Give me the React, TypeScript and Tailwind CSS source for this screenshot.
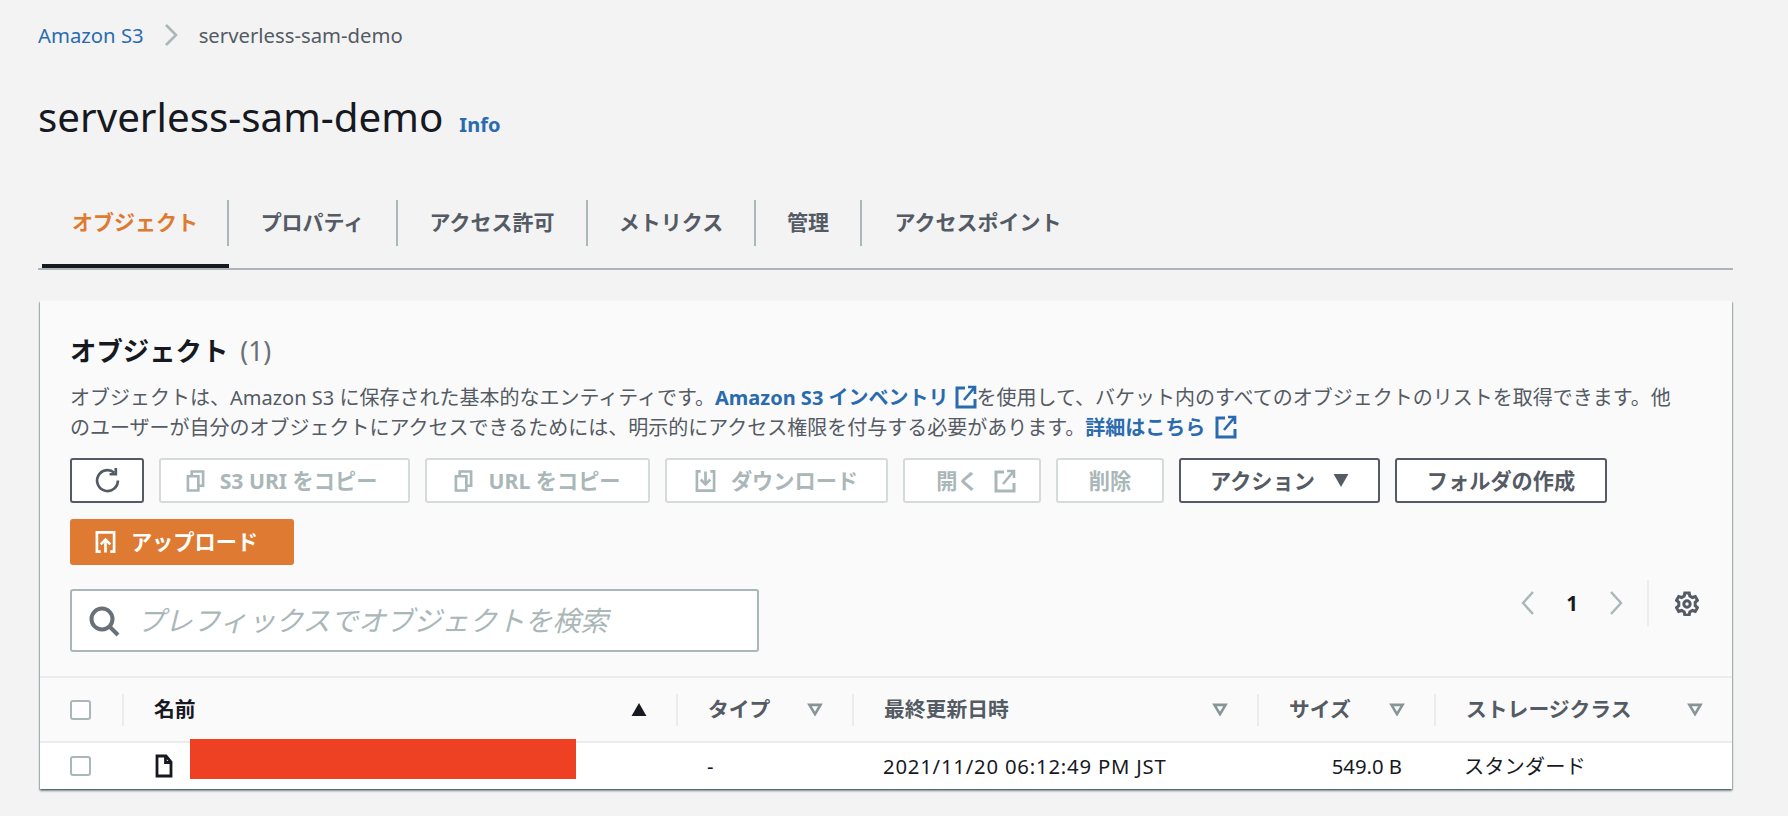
import React from "react";

const FONT = "font-['Noto_Sans','Noto_Sans_CJK_JP',sans-serif]";

function ExternalIcon({ className }: { className?: string }) {
  return (
    <svg viewBox="0 0 22 24" fill="none" stroke="currentColor" strokeWidth="3" className={className}>
      <path d="M10 3H2v19h18v-8" />
      <path d="M13 2h7v7M19.5 2.5 9 15" strokeWidth="2.6" />
    </svg>
  );
}

function CopyIcon() {
  return (
    <svg viewBox="0 0 20 24" fill="none" stroke="currentColor" strokeWidth="2.8" className="h-[24px] w-[19px]">
      <path d="M2 7h11v15H2z" />
      <path d="M6 7V2h12v15h-5" />
    </svg>
  );
}

function DownloadIcon() {
  return (
    <svg viewBox="0 0 22 24" fill="none" stroke="currentColor" strokeWidth="2.8" className="h-[26px] w-[21px]">
      <path d="M6 2H2v20h18V2h-4" />
      <path d="M11 2v13M6 10.5l5 5 5-5" />
    </svg>
  );
}

function UploadIcon() {
  return (
    <svg viewBox="0 0 22 24" fill="none" stroke="currentColor" strokeWidth="2.8" className="h-[26px] w-[21px]">
      <path d="M6 22H2V2h18v20h-4" />
      <path d="M11 23V10M6 14.5l5-5 5 5" />
    </svg>
  );
}

function DisabledButton({ w, icon, label, after }: { w: string; icon?: React.ReactNode; label: string; after?: React.ReactNode }) {
  return (
    <div className={`${w} flex h-[45px] items-center justify-center gap-[15px] rounded-[3px] border-2 border-[#d5dbdb] bg-white text-[21.2px] font-bold text-[#aab7b8]`}>
      {icon}
      <span>{label}</span>
      {after}
    </div>
  );
}

function SortDown({ dark }: { dark?: boolean }) {
  if (dark) {
    return (
      <svg viewBox="0 0 16 14" className="h-[13px] w-[16px] fill-[#16191f]">
        <path d="M8 0l8 14H0z" />
      </svg>
    );
  }
  return (
    <svg viewBox="0 0 16 14" fill="none" stroke="#879596" strokeWidth="2.8" className="h-[13px] w-[16px]">
      <path d="M2 2h12l-6 10z" />
    </svg>
  );
}

function HeaderCell({ label, w, dark, last }: { label: string; w: string; dark?: boolean; last?: boolean }) {
  return (
    <div className={`${w} flex h-[32px] items-center justify-between pl-[30px] pr-[29px] ${last ? "" : "border-r-2 border-[#eaeded]"}`}>
      <span className={`text-[20.8px] font-bold ${dark ? "text-[#16191f]" : "text-[#545b64]"}`}>{label}</span>
      <SortDown dark={dark} />
    </div>
  );
}

function Checkbox() {
  return <div className="h-[20px] w-[21px] rounded-[3px] border-2 border-[#aab7b8] bg-white" />;
}

function Tab({ w, label, active, noLine }: { w: string; label: string; active?: boolean; noLine?: boolean }) {
  return (
    <div className={`${w} h-[86px] py-[18px] ${active ? "border-b-4 border-[#16191f]" : ""}`}>
      <div className={`flex h-[46px] items-center ${noLine ? "" : "border-r-2 border-[#aab7b8]"} ${active ? "pl-[30px] text-[#df7a32]" : "justify-center"}`}>
        {label}
      </div>
    </div>
  );
}

export default function App() {
  return (
    <div className={`${FONT} h-[816px] overflow-hidden bg-[#f3f3f3] pl-[38px] pt-[22px] text-[#16191f]`}>
      {/* breadcrumb */}
      <div className="flex h-[26px] items-center text-[20.3px] leading-none">
        <span className="text-[#2a6bb0]">Amazon S3</span>
        <svg viewBox="0 0 14 22" fill="none" stroke="#aab7b8" strokeWidth="2.6" className="ml-[20px] mr-[21px] h-[22px] w-[14px]">
          <path d="M2 1l10 10L2 21" />
        </svg>
        <span className="text-[#545b64]">serverless-sam-demo</span>
      </div>

      {/* title */}
      <div className="mt-[44px] flex h-[50px] items-center">
        <h1 className="text-[40.3px] font-normal leading-none">serverless-sam-demo</h1>
        <span className="ml-[16px] mt-[16px] text-[20px] font-bold text-[#2a6bb0]">Info</span>
      </div>

      {/* tabs */}
      <div className="mt-[40px] flex h-[88px] w-[1695px] border-b-2 border-[#aab7b8] pl-[4px] text-[21px] font-bold text-[#545b64]">
        <Tab w="w-[187px]" label="オブジェクト" active />
        <Tab w="w-[169px]" label="プロパティ" />
        <Tab w="w-[190px]" label="アクセス許可" />
        <Tab w="w-[168px]" label="メトリクス" />
        <Tab w="w-[106px]" label="管理" />
        <Tab w="w-[232px]" label="アクセスポイント" noLine />
      </div>

      {/* card */}
      <div className="ml-[2px] mt-[31px] w-[1692px] bg-[#fafafa] shadow-[0_2px_2px_0_rgba(0,28,36,0.45),1px_1px_1px_0_rgba(0,28,36,0.2),-1px_1px_1px_0_rgba(0,28,36,0.2)]">
        <div className="pl-[30px] pr-[31px] pt-[34px]">
          <div className="flex h-[32px] items-center text-[26.4px] leading-none">
            <span className="font-bold">オブジェクト</span>
            <span className="ml-[12px] text-[#687078]">(1)</span>
          </div>
          <p className="mt-[16px] max-w-[1615px] text-[20px] leading-[30px] text-[#545b64]">
            オブジェクトは、Amazon S3 に保存された基本的なエンティティです。
            <span className="font-bold text-[#2a6bb0]">Amazon S3 インベントリ</span>
            <ExternalIcon className="ml-[6px] inline h-[24px] w-[22px] align-[-4px] text-[#2a6bb0]" />
            を使用して、バケット内のすべてのオブジェクトのリストを取得できます。他のユーザーが自分のオブジェクトにアクセスできるためには、明示的にアクセス権限を付与する必要があります。
            <span className="font-bold text-[#2a6bb0]">詳細はこちら</span>
            <ExternalIcon className="ml-[10px] inline h-[24px] w-[22px] align-[-4px] text-[#2a6bb0]" />
          </p>

          {/* actions */}
          <div className="mt-[15px] flex flex-wrap gap-x-[15px] gap-y-[16px]">
            <div className="flex h-[45px] w-[74px] items-center justify-center rounded-[3px] border-2 border-[#545b64] bg-white text-[#545b64]">
              <svg viewBox="0 0 24 26" fill="none" stroke="currentColor" strokeWidth="2.6" className="h-[27px] w-[25px]">
                <path d="M18.5 5.5A10 10 0 1 0 22 13" />
                <path d="M20 1v6h-6" />
              </svg>
            </div>
            <DisabledButton w="w-[251px] pr-[6px]" icon={<CopyIcon />} label="S3 URI をコピー" />
            <DisabledButton w="w-[225px]" icon={<CopyIcon />} label="URL をコピー" />
            <DisabledButton w="w-[223px]" icon={<DownloadIcon />} label="ダウンロード" />
            <DisabledButton w="w-[138px] pl-[8px]" label="開く" after={<ExternalIcon className="h-[24px] w-[22px]" />} />
            <DisabledButton w="w-[108px]" label="削除" />
            <div className="flex h-[45px] w-[201px] items-center justify-center gap-[18px] rounded-[3px] border-2 border-[#545b64] bg-white text-[21.2px] font-bold text-[#545b64]">
              <span>アクション</span>
              <svg viewBox="0 0 16 14" className="h-[13px] w-[16px] fill-[#545b64]">
                <path d="M0 0h16L8 14z" />
              </svg>
            </div>
            <div className="flex h-[45px] w-[212px] items-center justify-center rounded-[3px] border-2 border-[#545b64] bg-white text-[21.2px] font-bold text-[#545b64]">
              フォルダの作成
            </div>
            <div className="flex h-[46px] w-[224px] items-center justify-center gap-[15px] rounded-[3px] bg-[#df7a32] pr-[11px] text-[21.2px] font-bold text-white">
              <UploadIcon />
              <span>アップロード</span>
            </div>
          </div>

          {/* search + pager */}
          <div className="mt-[24px] flex items-start justify-between">
            <div className="flex h-[63px] w-[689px] items-center rounded-[3px] border-2 border-[#aab7b8] bg-white pl-[16px]">
              <svg viewBox="0 0 32 32" fill="none" stroke="#687078" strokeWidth="4" className="h-[32px] w-[32px]">
                <circle cx="14" cy="14" r="10.5" />
                <path d="M21.5 21.5 30 30" />
              </svg>
              <span className="ml-[17px] text-[27.8px] italic text-[#aab7b8]">プレフィックスでオブジェクトを検索</span>
            </div>
            <div className="-mt-[9px] flex h-[46px] items-center">
              <svg viewBox="0 0 14 24" fill="none" stroke="#aab7b8" strokeWidth="2.4" className="h-[24px] w-[14px]">
                <path d="M12 1 2 12l10 11" />
              </svg>
              <span className="mx-[31px] text-[20.5px] font-bold">1</span>
              <svg viewBox="0 0 14 24" fill="none" stroke="#aab7b8" strokeWidth="2.4" className="h-[24px] w-[14px]">
                <path d="m2 1 10 11L2 23" />
              </svg>
              <div className="ml-[24px] h-[46px] border-l-2 border-[#eaeded]" />
              <svg viewBox="0 0 24 24" fill="none" stroke="#545b64" strokeWidth="3" className="ml-[26px] mr-[2px] h-[26px] w-[24px]">
                <path d="M9.8 2h4.4l.6 3 2.6 1.5 2.9-1 2.2 3.8-2.3 2v3.4l2.3 2-2.2 3.8-2.9-1-2.6 1.5-.6 3H9.8l-.6-3-2.6-1.5-2.9 1-2.2-3.8 2.3-2v-3.4l-2.3-2 2.2-3.8 2.9 1 2.6-1.5z" />
                <circle cx="12" cy="13" r="3.2" />
              </svg>
            </div>
          </div>
        </div>

        {/* table */}
        <div className="mt-[24px] flex h-[67px] items-center border-y-2 border-[#eaeded]">
          <div className="flex h-[32px] w-[84px] items-center border-r-2 border-[#eaeded] pl-[30px]">
            <Checkbox />
          </div>
          <HeaderCell label="名前" w="w-[554px]" dark />
          <HeaderCell label="タイプ" w="w-[176px]" />
          <HeaderCell label="最終更新日時" w="w-[405px]" />
          <HeaderCell label="サイズ" w="w-[177px]" />
          <HeaderCell label="ストレージクラス" w="w-[296px]" last />
        </div>
        <div className="relative flex h-[46px] items-center bg-white text-[20.3px]">
          <div className="w-[84px] pl-[30px]">
            <Checkbox />
          </div>
          <div className="flex w-[554px] items-center pl-[31px]">
            <svg viewBox="0 0 18 24" fill="none" stroke="#16191f" strokeWidth="2.8" className="h-[24px] w-[18px]">
              <path d="M2 2h9l5 6v14H2z" />
              <path d="M10.5 2v6.5H16" />
            </svg>
          </div>
          {/* redaction bar over the file name */}
          <div className="absolute left-[150px] top-[-4px] h-[40px] w-[386px] bg-[#ee4023]" />
          <div className="w-[176px] pl-[29px]">-</div>
          <div className="w-[405px] pl-[29px] tracking-[0.8px]">2021/11/20 06:12:49 PM JST</div>
          <div className="w-[143px] text-right">549.0 B</div>
          <div className="pl-[62px]">スタンダード</div>
        </div>
      </div>
    </div>
  );
}
